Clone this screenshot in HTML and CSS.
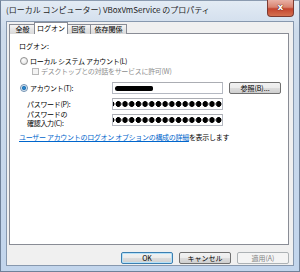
FILE: index.html
```
<!DOCTYPE html>
<html>
<head>
    <meta charset="utf-8" />
    <title>VBoxVmService のプロパティ</title>
    <link rel="stylesheet" href="styles.css">
</head>
<body>
    <div class="window">
        <div class="titlebar">
            <span class="title">(ローカル コンピューター) VBoxVmService のプロパティ</span>
            <span class="close">x</span>
        </div>
        <div class="client">
            <div class="tabs">
                <span class="tab">全般</span>
                <span class="tab active">ログオン</span>
                <span class="tab">回復</span>
                <span class="tab">依存関係</span>
            </div>
            <div class="panel">
                <div class="heading">ログオン:</div>
                <label class="option"><span class="radio"></span>ローカル システム アカウント(L)</label>
                <label class="option sub disabled"><span class="check"></span>デスクトップとの対話をサービスに許可(W)</label>
                <div class="account">
                    <label class="option"><span class="radio on"></span>アカウント(T):</label>
                    <div class="field"><span class="redact"></span></div>
                    <button class="btn">参照(B)...</button>
                    <label class="label">パスワード(P):</label>
                    <div class="field dots"></div>
                    <span></span>
                    <label class="label two">パスワードの<br>確認入力(C):</label>
                    <div class="field dots"></div>
                </div>
                <p class="more"><a href="#">ユーザー アカウントのログオン オプションの構成の詳細</a>を表示します</p>
            </div>
            <div class="buttons">
                <button class="btn default">OK</button>
                <button class="btn">キャンセル</button>
                <button class="btn" disabled>適用(A)</button>
            </div>
        </div>
    </div>
</body>
</html>
```

FILE: styles.css
```
*, *:before, *:after{
    box-sizing:border-box;
}
html, body{
    margin:0;
    width:300px;
    height:272px;
    overflow:hidden;
    font-family:"Noto Sans CJK JP", sans-serif;
    font-size:7px;
    color:#000;
}
.window{
    height:272px;
    border:1px solid #6f8199;
    border-top-color:#8b9bb0;
    padding:0 5px 5px 5px;
    background:linear-gradient(#e3ebf4, #cddbeb 30px, #c2d5ec);
}
.titlebar{
    height:20px;
    display:flex;
    align-items:flex-start;
    justify-content:space-between;
}
.title{
    font-size:8px;
    line-height:10px;
    margin-top:4px;
    color:#1e1e1e;
}
.close{
    width:27px;
    height:17px;
    margin-top:-1px;
    border:1px solid #7c3a31;
    border-top:none;
    border-radius:0 0 4px 4px;
    background:linear-gradient(#e9b1a5, #d9836f 45%, #c4452f 55%, #d4704f);
    color:#fff;
    font:bold 9px/14px "DejaVu Sans", sans-serif;
    text-align:center;
    text-shadow:0 0 1px #4a1a12, 0 0 1px #4a1a12;
}
.client{
    height:245px;
    border:1px solid #8798ae;
    background:#f0f0f0;
    padding:0 4px 0 2px;
}
.tabs{
    display:flex;
    align-items:flex-end;
    height:12px;
    margin-bottom:-1px;
    position:relative;
    z-index:1;
}
.tab{
    height:10px;
    line-height:8px;
    white-space:nowrap;
    text-align:center;
    border:1px solid #898c95;
    border-bottom:none;
    margin-left:-1px;
    background:linear-gradient(#f6f6f6, #e5e5e5 50%, #dadada);
}
.tab:first-child{
    margin-left:0;
    width:27px;
}
.tab.active{
    height:12px;
    line-height:10px;
    width:34px;
    margin:0 -1px 0 -2px;
    background:#fff;
    position:relative;
}
.tab:nth-child(3){
    width:25px;
}
.tab:nth-child(4){
    width:37px;
}
.panel{
    height:212px;
    border:1px solid #898c95;
    background:#fff;
    padding:7px 0 0 0;
}
.heading{
    line-height:10px;
    padding-left:9px;
}
.option{
    display:flex;
    align-items:center;
    height:10px;
    margin:5px 0 0 10px;
    letter-spacing:-0.3px;
    white-space:nowrap;
}
.option.sub{
    margin:0 0 0 22px;
}
.disabled{
    color:#8d8d8d;
}
.radio{
    width:8px;
    height:8px;
    border-radius:50%;
    border:1px solid #8f8f8f;
    background:radial-gradient(circle at 40% 35%, #fff, #dcdcdc);
    margin-right:2px;
    flex:none;
}
.radio.on{
    border-color:#6f8fb0;
    background:radial-gradient(circle, #1f8fd8 0, #2b78b8 1.6px, #e3eef8 2.6px, #fff 4px);
}
.check{
    width:7px;
    height:7px;
    border:1px solid #b8b8b8;
    background:#f4f4f4;
    margin-right:2px;
    flex:none;
}
.account{
    display:grid;
    grid-template-columns:86px 111px 52px;
    grid-template-rows:12px 12px 12px;
    column-gap:6px;
    row-gap:4px;
    margin:6px 0 0 10px;
    align-items:center;
}
.account .option{
    margin:0;
}
.label{
    padding-left:7px;
    line-height:8px;
    letter-spacing:-0.3px;
    white-space:nowrap;
}
.label.two{
    line-height:9px;
    margin-top:-3px;
}
.field{
    height:12px;
    border:1px solid #b5b9c2;
    border-top-color:#abadb3;
    background:#fff;
    padding:3px 0 0 2px;
}
.redact{
    display:block;
    width:38px;
    height:5px;
    border-radius:3px 2px 2px 3px;
    background:#000;
}
.dots{
    background-image:radial-gradient(circle, #000 2.6px, transparent 3.1px);
    background-size:6.7px 10px;
    background-position:2px 0;
    background-repeat:repeat-x;
}
.btn{
    height:12px;
    padding:0;
    font-family:inherit;
    font-size:7px;
    line-height:10px;
    color:#000;
    border:1px solid #707070;
    border-radius:2px;
    background:linear-gradient(#f2f2f2, #ebebeb 50%, #dddddd 50%, #cfcfcf);
}
.account .btn{
    width:52px;
}
.more{
    margin:6px 0 0 9px;
    line-height:10px;
    letter-spacing:-0.3px;
    white-space:nowrap;
}
a,
a:visited{
    color:#0066cc;
}
.buttons{
    display:flex;
    justify-content:flex-end;
    gap:6px;
    margin-top:7px;
}
.buttons .btn{
    width:52px;
}
.btn.default{
    border-color:#3c7fb1;
    box-shadow:inset 0 0 0 1px #b6e1f8;
}
.btn:disabled{
    border-color:#adb2b5;
    background:#f4f4f4;
    color:#838383;
}
```
